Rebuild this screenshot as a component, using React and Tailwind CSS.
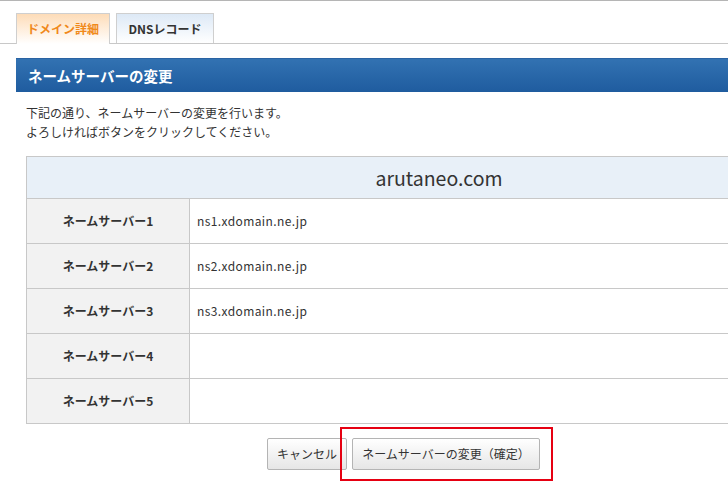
const FONT = { fontFamily: '"Noto Sans CJK JP", "Noto Sans", sans-serif' }

const SERVERS = [
  { label: 'ネームサーバー1', value: 'ns1.xdomain.ne.jp' },
  { label: 'ネームサーバー2', value: 'ns2.xdomain.ne.jp' },
  { label: 'ネームサーバー3', value: 'ns3.xdomain.ne.jp' },
  { label: 'ネームサーバー4', value: '' },
  { label: 'ネームサーバー5', value: '' },
]

export default function App() {
  return (
    <div className="w-full h-[491px] overflow-hidden bg-white text-[#333]" style={FONT}>
      <div className="border-t border-[#b5b5b5]">
        {/* Tabs */}
        <div className="flex items-end gap-[6px] pl-4 pt-[12px] border-b border-[#c8c8c8]">
          <div className="-mb-px h-[31px] w-[94px] flex items-center justify-center border border-b-0 border-[#cfcfcf] bg-gradient-to-b from-[#fddcb8] to-white text-[12px] font-bold text-[#f0891a]">
            ドメイン詳細
          </div>
          <div className="h-[30px] w-[98px] flex items-center justify-center border border-b-0 border-[#cfcfcf] bg-gradient-to-b from-[#dde9f6] to-white text-[12px] font-bold text-[#333]">
            DNSレコード
          </div>
        </div>

        {/* Section header */}
        <div className="ml-4 mt-[14px] h-[34px] flex items-center pl-3 bg-gradient-to-b from-[#3272b2] to-[#1f5c9f] border-t border-[#2a63a3]">
          <h2 className="text-[14.5px] font-bold text-white">ネームサーバーの変更</h2>
        </div>

        <p className="mt-[11px] pl-[26px] text-[12px] leading-[19px]">
          下記の通り、ネームサーバーの変更を行います。
          <br />
          よろしければボタンをクリックしてください。
        </p>

        {/* Table */}
        <div className="ml-[26px] mt-[15px] w-[826px] border border-[#c8c8c8]">
          <div className="h-[41px] flex items-center justify-center bg-[#e8f0f8] text-[19.5px]">
            arutaneo.com
          </div>
          {SERVERS.map(s => (
            <div key={s.label} className="flex h-[45px] border-t border-[#c8c8c8]">
              <div className="w-[163px] shrink-0 flex items-center justify-center bg-[#f2f2f2] border-r border-[#c8c8c8] text-[12px] font-bold">
                {s.label}
              </div>
              <div className="flex items-center pl-[7px] text-[12px] tracking-[0.4px]">{s.value}</div>
            </div>
          ))}
        </div>

        {/* Buttons */}
        <div className="relative mt-[14px] flex gap-[5px] pl-[267px]">
          <button className="h-[32px] w-[80px] border border-[#b4b4b4] rounded-[2px] bg-gradient-to-b from-white to-[#e6e6e6] text-[12px] text-[#333]">
            キャンセル
          </button>
          <button className="h-[32px] w-[188px] border border-[#b4b4b4] rounded-[2px] bg-gradient-to-b from-white to-[#e6e6e6] text-[12px] text-[#333]">
            ネームサーバーの変更（確定）
          </button>
          <div className="absolute left-[340px] top-[-11px] w-[213px] h-[54px] border-2 border-[#e60012] pointer-events-none" />
        </div>
      </div>
    </div>
  )
}
